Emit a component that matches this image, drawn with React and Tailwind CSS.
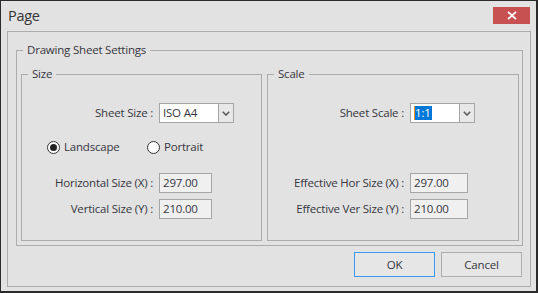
import React from "react";

function GroupBox({ title, className = "", children }) {
  return (
    <fieldset className={`border border-[#acacac] ${className}`}>
      <legend className="ml-[6px] px-[4px] text-[11.5px] leading-[16px]">{title}</legend>
      {children}
    </fieldset>
  );
}

function Chevron() {
  return (
    <svg width="8" height="5" viewBox="0 0 8 5">
      <path d="M0.8 0.8 L4 4 L7.2 0.8" fill="none" stroke="#5a5a5a" strokeWidth="1.6" />
    </svg>
  );
}

function Combo({ width, children }) {
  return (
    <div className={`${width} h-[20px] border border-[#a5a5a5] bg-white flex`}>
      <div className="flex-1 pl-[3px] flex items-center">{children}</div>
      <div className="w-[15px] border-l border-[#a5a5a5] bg-[#e8e8e8] flex items-center justify-center">
        <Chevron />
      </div>
    </div>
  );
}

function Field({ width, value }) {
  return (
    <div className={`${width} h-[20px] border border-[#a5a5a5] bg-[#f0f0f0] pl-[3px] flex items-center`}>
      {value}
    </div>
  );
}

function Row({ labelWidth, label, className = "", children }) {
  return (
    <div className={`h-[20px] flex items-center ${className}`}>
      <span className={`${labelWidth} text-right whitespace-nowrap`}>{label}</span>
      <div className="ml-[6px]">{children}</div>
    </div>
  );
}

function Radio({ checked, label, className = "" }) {
  return (
    <label className={`flex items-center gap-[4px] ${className}`}>
      <span className="w-[13px] h-[13px] rounded-full border border-[#333333] bg-white flex items-center justify-center">
        {checked && <span className="w-[7px] h-[7px] rounded-full bg-[#222222]" />}
      </span>
      <span>{label}</span>
    </label>
  );
}

function Button({ children, focused }) {
  return (
    <button
      className={`w-[81px] h-[25px] border ${
        focused ? "border-[#3d99f5]" : "border-[#adadad]"
      } bg-[#e6e6e6] flex items-center justify-center`}
    >
      {children}
    </button>
  );
}

export default function App() {
  return (
    <div className="w-[538px] h-[293px] bg-[#e2e2e2] border-t border-l border-r-2 border-b-2 border-[#2b2b2b] flex flex-col font-['Open_Sans',sans-serif] text-[11.5px] tracking-[-0.2px] text-[#363640]">
      <div className="h-[30px] flex items-start justify-between">
        <span className="ml-[7px] mt-[5px] text-[14.5px] leading-[20px] tracking-[-0.3px] text-[#333333]">Page</span>
        <button className="mt-[6px] mr-[6px] w-[37px] h-[17px] bg-[#c75050] flex items-center justify-center">
          <svg width="10" height="9" viewBox="0 0 10 9">
            <path d="M1 0.8 L9 8.2 M9 0.8 L1 8.2" stroke="#ffffff" strokeWidth="1.8" />
          </svg>
        </button>
      </div>

      <div className="ml-[6px] mr-[5px] h-[256px] border border-[#acacac] pt-[10px] flex flex-col">
        <div className="pl-[8px] pr-[7px]">
          <GroupBox title="Drawing Sheet Settings">
            <div className="mt-[8px] pl-[4px] pr-[3px] pb-[4px] flex gap-[5px]">
              <GroupBox title="Size" className="w-[241px] h-[175px]">
                <div className="flex flex-col">
                  <Row labelWidth="w-[131px]" label="Sheet Size :" className="mt-[21px]">
                    <Combo width="w-[75px]">ISO A4</Combo>
                  </Row>
                  <div className="mt-[14px] h-[20px] flex items-center pl-[25px]">
                    <Radio checked label="Landscape" className="w-[100px]" />
                    <Radio label="Portrait" />
                  </div>
                  <Row labelWidth="w-[131px]" label="Horizontal Size (X) :" className="mt-[16px]">
                    <Field width="w-[53px]" value="297.00" />
                  </Row>
                  <Row labelWidth="w-[131px]" label="Vertical Size (Y) :" className="mt-[6px]">
                    <Field width="w-[53px]" value="210.00" />
                  </Row>
                </div>
              </GroupBox>

              <GroupBox title="Scale" className="w-[252px] h-[175px]">
                <div className="flex flex-col">
                  <Row labelWidth="w-[136px]" label="Sheet Scale :" className="mt-[21px]">
                    <Combo width="w-[65px]">
                      <span className="bg-[#0078d7] text-white leading-[14px] border-l border-[#f7931e] pr-[1px]">1:1</span>
                    </Combo>
                  </Row>
                  <Row labelWidth="w-[136px]" label="Effective Hor Size (X) :" className="mt-[50px]">
                    <Field width="w-[58px]" value="297.00" />
                  </Row>
                  <Row labelWidth="w-[136px]" label="Effective Ver Size (Y) :" className="mt-[6px]">
                    <Field width="w-[58px]" value="210.00" />
                  </Row>
                </div>
              </GroupBox>
            </div>
          </GroupBox>
        </div>

        <div className="mt-[6px] pr-[8px] flex justify-end gap-[6px]">
          <Button focused>OK</Button>
          <Button>Cancel</Button>
        </div>
      </div>
    </div>
  );
}
